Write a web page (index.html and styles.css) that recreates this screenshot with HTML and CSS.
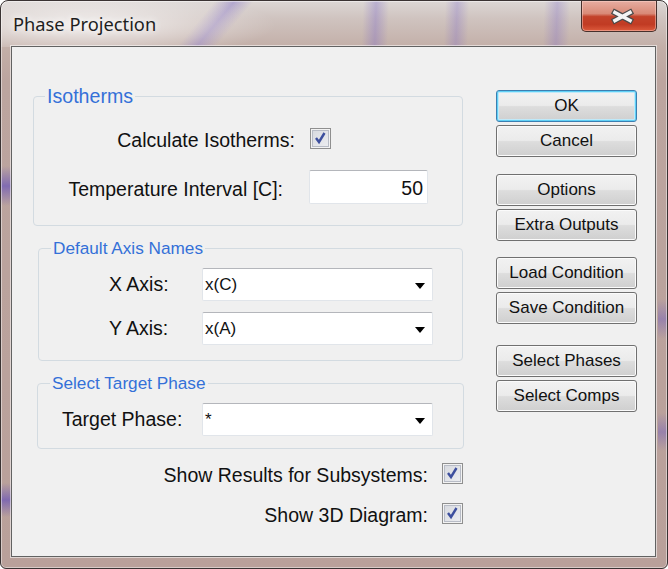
FILE: index.html
```html
<!DOCTYPE html>
<html>
<head>
<meta charset="utf-8">
<title>Phase Projection</title>
<link rel="stylesheet" href="styles.css">
</head>
<body>
<div class="window">
  <div class="titlebar">
    <span class="title">Phase Projection</span>
    <button class="close" aria-label="Close">
      <svg width="76" height="31" viewBox="0 0 76 31">
        <path d="M33 11.5 L48 19.5 M48 11.5 L33 19.5" stroke="#4a4a4a" stroke-width="6" stroke-linecap="square" fill="none"/>
        <path d="M33 11.5 L48 19.5 M48 11.5 L33 19.5" stroke="#f4f4f4" stroke-width="3.6" stroke-linecap="square" fill="none"/>
      </svg>
    </button>
  </div>
  <div class="client">
    <div class="left">
      <fieldset class="group g1">
        <legend class="legend legend-big">Isotherms</legend>
        <div class="row row-calc">
          <span class="label low lbl-calc">Calculate Isotherms:</span>
          <span class="check chk-calc"><svg width="19" height="19" viewBox="0 0 19 19"><path d="M5 9 L8 13 L13.5 4" stroke="#3d4f9e" stroke-width="2.4" fill="none"/></svg></span>
        </div>
        <div class="row row-temp">
          <span class="label low lbl-temp">Temperature Interval [C]:</span>
          <span class="textbox">50</span>
        </div>
      </fieldset>

      <fieldset class="group g2">
        <legend class="legend">Default Axis Names</legend>
        <div class="row row-x">
          <span class="label lbl-axis">X Axis:</span>
          <span class="combo"><span class="combo-text">x(C)</span><span class="arrow"></span></span>
        </div>
        <div class="row row-y">
          <span class="label lbl-axis">Y Axis:</span>
          <span class="combo"><span class="combo-text">x(A)</span><span class="arrow"></span></span>
        </div>
      </fieldset>

      <fieldset class="group g3">
        <legend class="legend">Select Target Phase</legend>
        <div class="row row-target">
          <span class="label lbl-target">Target Phase:</span>
          <span class="combo"><span class="combo-text">*</span><span class="arrow"></span></span>
        </div>
      </fieldset>

      <div class="opt opt-sub">
        <span class="label low">Show Results for Subsystems:</span>
        <span class="check opt-check"><svg width="19" height="19" viewBox="0 0 19 19"><path d="M5 9 L8 13 L13.5 4" stroke="#3d4f9e" stroke-width="2.4" fill="none"/></svg></span>
      </div>
      <div class="opt opt-3d">
        <span class="label low">Show 3D Diagram:</span>
        <span class="check opt-check"><svg width="19" height="19" viewBox="0 0 19 19"><path d="M5 9 L8 13 L13.5 4" stroke="#3d4f9e" stroke-width="2.4" fill="none"/></svg></span>
      </div>
    </div>

    <div class="buttons">
      <button class="btn btn-default">OK</button>
      <button class="btn gap-s">Cancel</button>
      <button class="btn gap-l">Options</button>
      <button class="btn gap-s">Extra Outputs</button>
      <button class="btn gap-m">Load Condition</button>
      <button class="btn gap-s">Save Condition</button>
      <button class="btn gap-xl">Select Phases</button>
      <button class="btn gap-s">Select Comps</button>
    </div>
  </div>
</div>
</body>
</html>
```

FILE: styles.css
```css
* { box-sizing: border-box; }

html, body {
  margin: 0;
  padding: 0;
}

body {
  width: 668px;
  height: 569px;
  overflow: hidden;
  background: #ffffff;
  font-family: "Liberation Sans", Arial, sans-serif;
}

.window {
  width: 668px;
  height: 569px;
  border: 1px solid #3a3333;
  border-radius: 8px 8px 6px 6px;
  padding: 0 11px 11px 10px;
  display: flex;
  flex-direction: column;
  box-shadow: inset 0 0 0 1px rgba(255, 255, 255, 0.45);
  background:
    radial-gradient(ellipse 190px 34px at 85px 24px, rgba(255,255,255,0.75), rgba(255,255,255,0)) no-repeat 0 0 / 100% 46px,
    linear-gradient(130deg, rgba(115,95,200,0) 164px, rgba(115,95,200,0.38) 179px, rgba(115,95,200,0) 194px) no-repeat 0 0 / 100% 46px,
    linear-gradient(92deg, rgba(115,95,200,0) 362px, rgba(115,95,200,0.32) 375px, rgba(115,95,200,0) 388px,
      rgba(115,95,200,0) 444px, rgba(115,95,200,0.28) 456px, rgba(115,95,200,0) 468px,
      rgba(115,95,200,0) 543px, rgba(115,95,200,0.28) 556px, rgba(115,95,200,0) 569px) no-repeat 0 0 / 100% 46px,
    linear-gradient(rgba(90,70,190,0), rgba(90,70,190,0.6), rgba(90,70,190,0)) no-repeat 0 165px / 10px 40px,
    linear-gradient(rgba(90,70,190,0), rgba(90,70,190,0.6), rgba(90,70,190,0)) no-repeat 0 482px / 10px 34px,
    linear-gradient(rgba(110,90,190,0), rgba(110,90,190,0.45), rgba(110,90,190,0)) no-repeat 657px 298px / 10px 40px,
    linear-gradient(rgba(110,90,190,0), rgba(110,90,190,0.45), rgba(110,90,190,0)) no-repeat 657px 412px / 10px 38px,
    linear-gradient(to bottom, #dcd7d5 0, #cfc3bf 18px, #c3afa8 46px, #bca59f 80px, #b9a09a 100%);
}

/* ---------- title bar ---------- */
.titlebar {
  height: 45px;
  display: flex;
  justify-content: space-between;
  align-items: flex-start;
  flex: none;
}

.title {
  margin: 10px 0 0 2px;
  font-family: "Noto Sans", "Open Sans", sans-serif;
  font-size: 18.3px;
  line-height: 25px;
  color: #1e1e1e;
  text-shadow: 0 0 6px rgba(255,255,255,0.9), 0 0 12px rgba(255,255,255,0.7);
}

.close {
  width: 76px;
  height: 31px;
  margin: 0 -1px 0 0;
  padding: 0;
  border: 1px solid #47302c;
  border-top: none;
  border-radius: 0 0 5px 5px;
  background: linear-gradient(to bottom, #e6ada1 0%, #d98a77 42%, #c3432b 52%, #c13b23 78%, #dc5a3c 100%);
  box-shadow: inset 0 0 0 1px rgba(255, 220, 210, 0.45);
  display: block;
}

.close svg { display: block; }

/* ---------- client area ---------- */
.client {
  flex: 1;
  display: flex;
  align-items: flex-start;
  border: 1px solid #626262;
  background: #f0f0f0;
  box-shadow: 0 0 0 1px rgba(255, 255, 255, 0.55);
  padding: 39px 0 0 21px;
}

.left {
  width: 430px;
  display: flex;
  flex-direction: column;
}

.label {
  font-size: 19.5px;
  color: #111;
  white-space: nowrap;
}

.low { padding-top: 4px; }

/* ---------- group boxes ---------- */
.group {
  margin: 0;
  padding: 0;
  border: 1px solid #d3dbe1;
  border-radius: 4px;
  min-width: 0;
}

.legend {
  margin-left: 12px;
  padding: 0 2px;
  font-size: 17.2px;
  line-height: 21px;
  color: #3470d8;
}

.legend-big {
  margin-left: 11px;
  font-size: 19.6px;
}

.g1 {
  width: 430px;
  padding-bottom: 21px;
}

.g2 {
  width: 425px;
  margin-top: 12px;
  margin-left: 5px;
  padding-bottom: 15px;
}

.g3 {
  width: 427px;
  margin-top: 12px;
  margin-left: 4px;
  padding-bottom: 12px;
}

.row {
  display: flex;
  align-items: center;
}

.row-calc { margin-top: 15px; height: 33px; }
.row-temp { margin-top: 15px; height: 34px; }

.lbl-calc { width: 261px; text-align: right; }
.lbl-temp { width: 249px; text-align: right; }

.chk-calc { margin-left: 15px; }

.textbox {
  margin-left: 26px;
  width: 119px;
  height: 34px;
  background: #fff;
  border: 1px solid #e1e5ea;
  border-top-color: #b4b6bb;
  border-radius: 2px;
  font-size: 19.5px;
  line-height: 34px;
  text-align: right;
  padding-right: 4px;
  color: #111;
}

.row-x { margin-top: 9px; height: 33px; padding-left: 70px; }
.row-y { margin-top: 11px; height: 33px; padding-left: 70px; }
.lbl-axis { width: 93px; }

.row-target { margin-top: 9px; height: 33px; padding-left: 24px; }
.lbl-target { width: 140px; }

.combo {
  width: 231px;
  height: 33px;
  display: flex;
  align-items: center;
  justify-content: space-between;
  background: #fff;
  border: 1px solid #e1e5ea;
  border-top-color: #b4b6bb;
  border-radius: 2px;
  padding: 0 7px 0 2px;
}

.combo-text {
  font-size: 17px;
  color: #111;
}

.arrow {
  width: 0;
  height: 0;
  margin-top: 3px;
  border-left: 5.5px solid transparent;
  border-right: 5.5px solid transparent;
  border-top: 6.5px solid #000;
}

/* ---------- check boxes ---------- */
.check {
  width: 21px;
  height: 21px;
  flex: none;
  border: 1px solid #8f8f8f;
  background: linear-gradient(135deg, #d6d8de, #eeeff2);
  box-shadow: inset 0 0 0 1px #f3f3f3, inset 0 0 0 2px #b8bcc6;
  display: block;
}

.check svg { display: block; }

.opt {
  display: flex;
  justify-content: flex-end;
  align-items: center;
  height: 21px;
}

.opt-sub { margin-top: 14px; }
.opt-3d { margin-top: 19px; }
.opt-check { margin-left: 14px; }

/* ---------- buttons ---------- */
.buttons {
  margin-left: 33px;
  width: 141px;
  display: flex;
  flex-direction: column;
  padding-top: 4px;
}

.btn {
  height: 32px;
  width: 141px;
  margin: 0;
  padding: 0;
  font-family: "Liberation Sans", Arial, sans-serif;
  font-size: 17px;
  color: #111;
  border: 1px solid #707070;
  border-radius: 3px;
  background: linear-gradient(to bottom, #f2f2f2 0%, #ebebeb 48%, #dddddd 52%, #cfcfcf 100%);
  box-shadow: inset 0 0 0 1px #fbfbfb;
}

.btn-default {
  border-color: #3c7fb1;
  box-shadow: inset 0 0 0 1px #5fd0f6, inset 0 0 0 2px #bfe9f9;
}

.gap-s { margin-top: 3px; }
.gap-l { margin-top: 17px; }
.gap-m { margin-top: 16px; }
.gap-xl { margin-top: 21px; }
```
